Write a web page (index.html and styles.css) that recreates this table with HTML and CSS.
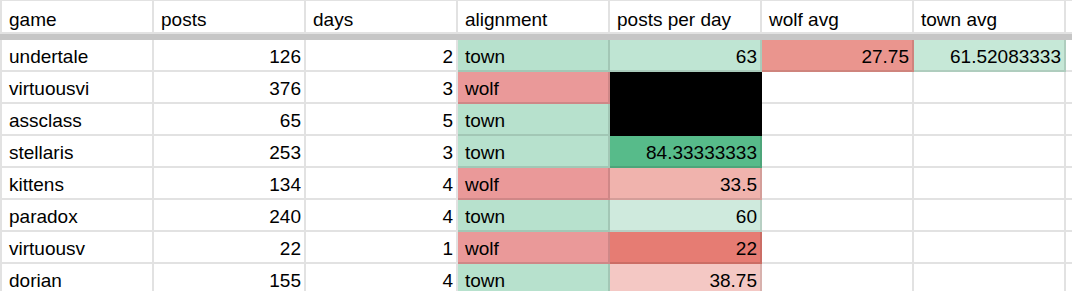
FILE: index.html
```html
<!DOCTYPE html>
<html>
<head>
<meta charset="utf-8">
<link rel="stylesheet" href="styles.css">
</head>
<body>
<div class="sheet">
  <div class="row head">
    <div class="c">game</div><div class="c">posts</div><div class="c">days</div><div class="c">alignment</div><div class="c">posts per day</div><div class="c">wolf avg</div><div class="c">town avg</div><div class="c"></div>
  </div>
  <div class="freeze"></div>
  <div class="row">
    <div class="c">undertale</div><div class="c n">126</div><div class="c n">2</div><div class="c town">town</div><div class="c n ppd-63">63</div><div class="c n wavg">27.75</div><div class="c n tavg">61.52083333</div><div class="c"></div>
  </div>
  <div class="row">
    <div class="c">virtuousvi</div><div class="c n">376</div><div class="c n">3</div><div class="c wolf">wolf</div><div class="c n black"></div><div class="c"></div><div class="c"></div><div class="c"></div>
  </div>
  <div class="row">
    <div class="c">assclass</div><div class="c n">65</div><div class="c n">5</div><div class="c town">town</div><div class="c n black"></div><div class="c"></div><div class="c"></div><div class="c"></div>
  </div>
  <div class="row">
    <div class="c">stellaris</div><div class="c n">253</div><div class="c n">3</div><div class="c town">town</div><div class="c n ppd-84">84.33333333</div><div class="c"></div><div class="c"></div><div class="c"></div>
  </div>
  <div class="row">
    <div class="c">kittens</div><div class="c n">134</div><div class="c n">4</div><div class="c wolf">wolf</div><div class="c n ppd-33">33.5</div><div class="c"></div><div class="c"></div><div class="c"></div>
  </div>
  <div class="row">
    <div class="c">paradox</div><div class="c n">240</div><div class="c n">4</div><div class="c town">town</div><div class="c n ppd-60">60</div><div class="c"></div><div class="c"></div><div class="c"></div>
  </div>
  <div class="row">
    <div class="c">virtuousv</div><div class="c n">22</div><div class="c n">1</div><div class="c wolf">wolf</div><div class="c n ppd-22">22</div><div class="c"></div><div class="c"></div><div class="c"></div>
  </div>
  <div class="row">
    <div class="c">dorian</div><div class="c n">155</div><div class="c n">4</div><div class="c town">town</div><div class="c n ppd-38">38.75</div><div class="c"></div><div class="c"></div><div class="c"></div>
  </div>
</div>
</body>
</html>
```
FILE: styles.css
```css
html, body {
  margin: 0;
  padding: 0;
  background: #ffffff;
  overflow: hidden;
}
body {
  width: 1072px;
  height: 291px;
}
.sheet {
  font-family: "Liberation Sans", Arial, sans-serif;
  font-size: 19px;
  color: #000000;
  width: 1072px;
  overflow: hidden;
}
.row {
  display: grid;
  grid-template-columns: 154px repeat(6, 152px) 1fr;
}
.c {
  box-sizing: border-box;
  height: 32px;
  min-width: 0;
  border-right: 2px solid rgba(0, 0, 0, 0.115);
  border-bottom: 2px solid rgba(0, 0, 0, 0.115);
  padding: 6px 3px 2px 7px;
  line-height: 22px;
  white-space: nowrap;
  overflow: hidden;
}
.row .c:first-child {
  border-left: 2px solid rgba(0, 0, 0, 0.115);
}
.row .c:last-child {
  border-right: none;
  padding: 0;
}
.head .c {
  height: 34px;
  border-top: 1px solid rgba(0, 0, 0, 0.115);
  padding-top: 8px;
  padding-bottom: 1px;
}
.freeze {
  height: 6px;
  background: #c6c6c6;
}
.n {
  text-align: right;
}
.town {
  background: #b7e1cd;
}
.wolf {
  background: #ea9999;
}
.black {
  background: #000000;
  border-right-color: #000000;
  border-bottom-color: #000000;
}
.ppd-63 { background: #bfe5d3; }
.ppd-84 { background: #57bb8a; }
.ppd-33 { background: #f0b3ad; }
.ppd-60 { background: #cfeadd; }
.ppd-22 { background: #e67c73; }
.ppd-38 { background: #f4c8c4; }
.wavg { background: #ea958e; }
.tavg { background: #c6e8d7; }
```
